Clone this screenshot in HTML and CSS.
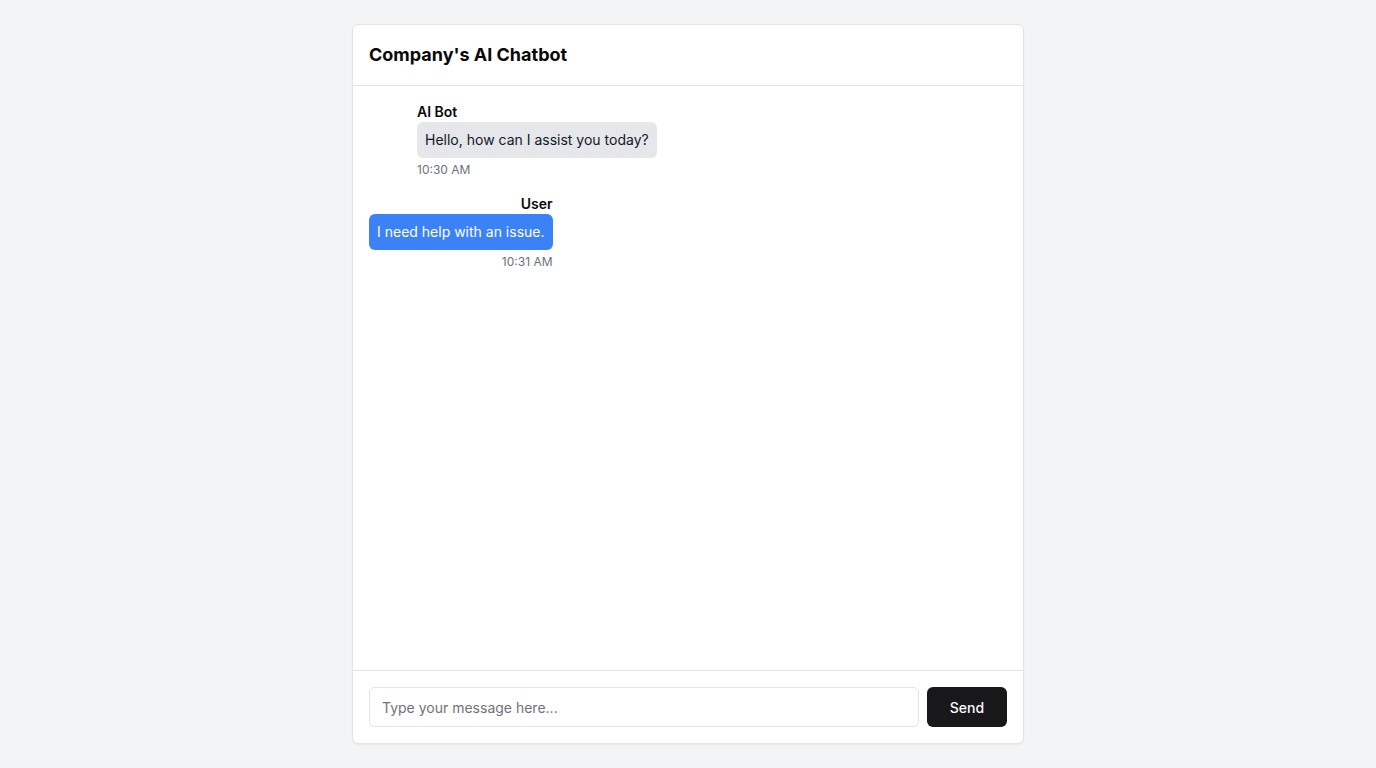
FILE: index.html
```html
<!DOCTYPE html>
<html>
<head>
<meta charset="utf-8">
<link rel="stylesheet" href="styles.css">
</head>
<body>
<main class="page">
  <section class="card">
    <header class="card-header">
      <h1 class="title">Company's AI Chatbot</h1>
    </header>
    <div class="messages">
      <div class="msg bot">
        <div class="avatar"></div>
        <div class="msg-body">
          <div class="name">AI Bot</div>
          <div class="bubble bubble-bot">Hello, how can I assist you today?</div>
          <div class="time">10:30 AM</div>
        </div>
      </div>
      <div class="msg user">
        <div class="msg-body right">
          <div class="name">User</div>
          <div class="bubble bubble-user">I need help with an issue.</div>
          <div class="time">10:31 AM</div>
        </div>
      </div>
    </div>
    <footer class="card-footer">
      <input class="input" type="text" placeholder="Type your message here...">
      <button class="send">Send</button>
    </footer>
  </section>
</main>
</body>
</html>
```
FILE: styles.css
```css
* { box-sizing: border-box; }
html, body { margin: 0; padding: 0; }
body {
  background: #f3f4f6;
  font-family: Inter, "Liberation Sans", sans-serif;
  color: #09090b;
}
.page {
  height: 768px;
  padding: 24px 0;
  display: flex;
  justify-content: center;
}
.card {
  width: 672px;
  height: 720px;
  background: #fff;
  border: 1px solid #e4e4e7;
  border-radius: 6px;
  box-shadow: 0 1px 2px rgba(0,0,0,0.05);
  display: flex;
  flex-direction: column;
}
.card-header {
  padding: 16px;
  border-bottom: 1px solid #e4e4e7;
}
.title {
  margin: 0;
  font-size: 18px;
  line-height: 28px;
  font-weight: 700;
}
.messages {
  flex: 1;
  padding: 16px;
  display: flex;
  flex-direction: column;
  gap: 16px;
  overflow: auto;
}
.msg {
  display: flex;
  gap: 8px;
  align-items: flex-start;
}
.avatar {
  width: 40px;
  height: 40px;
  flex: none;
}
.msg-body {
  display: flex;
  flex-direction: column;
  align-items: flex-start;
}
.msg-body.right { align-items: flex-end; }
.name {
  font-size: 14px;
  line-height: 20px;
  font-weight: 600;
}
.bubble {
  font-size: 14px;
  line-height: 20px;
  padding: 8px;
  border-radius: 6px;
}
.bubble-bot { background: #e5e7eb; color: #111827; }
.bubble-user { background: #3b82f6; color: #fff; }
.time {
  margin-top: 4px;
  font-size: 12px;
  line-height: 16px;
  color: #6b7280;
}
.card-footer {
  border-top: 1px solid #e4e4e7;
  padding: 16px;
  display: flex;
  gap: 8px;
}
.input {
  flex: 1;
  height: 40px;
  border: 1px solid #e4e4e7;
  border-radius: 6px;
  padding: 8px 12px;
  font-family: inherit;
  font-size: 14px;
  color: #09090b;
  outline: none;
}
.input::placeholder { color: #71717a; }
.send {
  width: 80px;
  height: 40px;
  border: none;
  border-radius: 6px;
  background: #18181b;
  color: #fafafa;
  font-family: inherit;
  font-size: 14px;
  font-weight: 500;
}
```
